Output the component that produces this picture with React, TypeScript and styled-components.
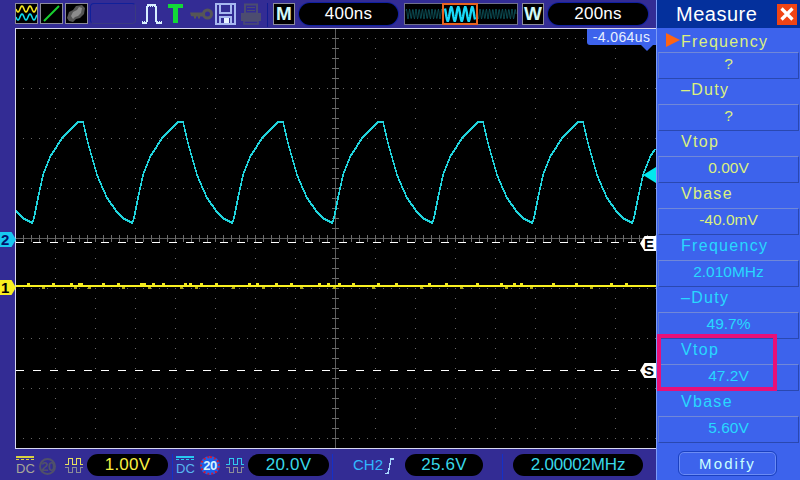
import React from "react";
import styled, { createGlobalStyle } from "styled-components";

const Global = createGlobalStyle`
  html, body { margin: 0; padding: 0; background: #332c94; }
  #root { width: 800px; height: 480px; overflow: hidden; }
  * { box-sizing: border-box; }
`;
const FONT = `"Liberation Sans", Arial, sans-serif`;

const Screen = styled.div`
  width: 800px; height: 480px; display: flex; font-family: ${FONT}; background: #332c94; position: relative; overflow: hidden;
`;
const LeftColumn = styled.div`
  width: 656px; height: 480px; display: flex; flex-direction: column;
`;
const TopBar = styled.div`
  height: 28px; padding: 3px 0 0 15px; display: flex; align-items: flex-start; flex: none;
`;
const IconFrame = styled.div<{ $mr?: number }>`
  width: 23px; height: 21px; margin-right: ${p => p.$mr ?? 2}px; background: #000; border: 1px solid #8c8c9c; display: flex; flex: none;
`;
const EmptySlot = styled.div`
  width: 46px; height: 21px; margin-right: 5px; border: 1px solid #1c2a9c; border-radius: 4px; border-color: #10209a #3a3a80 #3a3a80 #10209a; flex: none;
`;
const ToolIcon = styled.svg<{ $w: number; $mr: number }>`
  width: ${p => p.$w}px; height: 22px; margin-right: ${p => p.$mr}px; flex: none; display: block;
`;
const Separator = styled.div<{ $mr: number; $ml?: number }>`
  width: 1px; height: 24px; background: #101c90; margin: 0 ${p => p.$mr}px 0 ${p => p.$ml ?? 0}px; flex: none;
`;
const LetterBox = styled.div<{ $mr: number }>`
  width: 22px; height: 22px; margin-right: ${p => p.$mr}px; background: #000; border: 1px solid #8c8c9c; color: #d0f8f8;
  font: bold 19px/20px ${FONT}; text-align: center; flex: none;
`;
const Pill = styled.div<{ $w: number; $mr?: number; $color?: string; $ls?: number }>`
  width: ${p => p.$w}px; height: 22px; margin-right: ${p => p.$mr ?? 0}px; border-radius: 11px; background: #000;
  color: ${p => p.$color ?? "#fff"}; font-size: 17px; line-height: 22px; letter-spacing: ${p => p.$ls ?? 0.2}px;
  text-align: center; flex: none;
`;
const TopPill = styled(Pill)`
  box-shadow: 0 0 0 1px #1020a0;
`;
const WaveView = styled.svg`
  width: 114px; height: 22px; margin-right: 4px; flex: none; display: block;
`;
const Scope = styled.div`
  position: relative; width: 641px; height: 421px; margin-left: 15px; background: #000; flex: none;
  border-top: 1px solid #d8d8f0; border-left: 1px solid #d8d8f0; border-bottom: 1px solid #d8d8f0;
`;
const Plot = styled.svg`
  display: block; width: 640px; height: 419px;
`;
const TimeTag = styled.div`
  position: absolute; top: 0; right: 0; width: 69px; height: 16px; background: #3d63ec; color: #e8f0ff; border-radius: 0 0 0 3px;
  font-size: 14px; line-height: 16px; letter-spacing: 0.4px; text-align: center; white-space: nowrap;
  &::after { content: ""; position: absolute; top: 16px; right: 3px; border: 6px solid transparent; border-top: 6px solid #3d63ec; border-bottom: 0; }
`;
const Marker = styled.div<{ $y: number; $bg: string; $side: "left" | "right"; $fg?: string }>`
  position: absolute; top: ${p => p.$y - 29 - 7}px; ${p => p.$side === "left" ? "left: -16px;" : "right: 0;"}
  width: 16px; height: 15px; background: ${p => p.$bg}; color: ${p => p.$fg ?? "#000"};
  clip-path: ${p => p.$side === "left"
    ? "polygon(0 0, 72% 0, 100% 50%, 72% 100%, 0 100%)"
    : "polygon(28% 0, 100% 0, 100% 100%, 28% 100%, 0 50%)"};
  font: bold 15px/15px ${FONT}; text-align: ${p => p.$side === "left" ? "left" : "right"}; padding: 0 ${p => p.$side === "left" ? 1 : 2}px;
`;
const TriggerArrow = styled.div`
  position: absolute; top: 138px; right: 0; width: 0; height: 0;
  border-top: 8px solid transparent; border-bottom: 8px solid transparent; border-right: 13px solid #00e8ee;
`;
const BottomBar = styled.div`
  flex: 1; display: flex; align-items: flex-start; padding: 5px 0 0 16px;
`;
const DcBadge = styled.div<{ $color: string; $text: string; $mr: number }>`
  width: 18px; height: 20px; margin: 2px ${p => p.$mr}px 0 0; flex: none; color: ${p => p.$text};
  border-top: 2px solid ${p => p.$color};
  font: 13px/11px ${FONT}; text-align: center;
  &::before { content: ""; display: block; height: 1px; margin: 1px 0 2px; border-top: 1px dashed ${p => p.$color}; }
`;
const LimitBadge = styled.div<{ $on?: boolean; $mr: number }>`
  width: ${p => p.$on ? 20 : 17}px; height: ${p => p.$on ? 19 : 17}px; margin: ${p => p.$on ? 2 : 4}px ${p => p.$mr}px 0 0; flex: none; border-radius: 50%;
  background: ${p => p.$on ? "#1e60e8" : "transparent"}; border: 2px ${p => p.$on ? "dotted #d01838" : "solid #50506a"};
  color: ${p => p.$on ? "#d8f4ff" : "#50506a"}; font: bold 13px/${p => p.$on ? 15 : 13}px ${FONT}; text-align: center; letter-spacing: -0.5px;
`;
const CoupleIcon = styled.svg<{ $mr: number }>`
  width: 18px; height: 18px; margin: 2px ${p => p.$mr}px 0 0; flex: none; display: block;
`;
const BarSeparator = styled.div<{ $mr: number; $ml?: number }>`
  width: 1px; height: 26px; background: #1430c8; margin: 0 ${p => p.$mr}px 0 ${p => p.$ml ?? 0}px; flex: none;
`;
const SourceLabel = styled.div`
  width: 32px; color: #30b8ff; font-size: 15px; line-height: 22px; flex: none; white-space: nowrap;
`;
const EdgeIcon = styled.svg`
  width: 9px; height: 18px; margin: 3px 11px 0 0; flex: none; display: block;
`;
const Panel = styled.div`
  width: 144px; height: 480px; background: #3d63ec; border-left: 1px solid #7c9cf8; display: flex; flex-direction: column; flex: none;
`;
const PanelHeader = styled.div`
  height: 28px; background: #04309c; display: flex; align-items: center; padding: 0 3px 0 19px; flex: none;
`;
const PanelTitle = styled.div`
  flex: 1; color: #fff; font-size: 20px; letter-spacing: 0.5px; line-height: 28px;
`;
const CloseButton = styled.div`
  width: 20px; height: 21px; background: #f04414; display: flex; align-items: center; justify-content: center; flex: none;
`;
const Rows = styled.div`
  display: flex; flex-direction: column;
`;
const MeasureItem = styled.div`
  display: flex; flex-direction: column; height: 52px;
`;
const ItemLabel = styled.div<{ $color: string; $first?: boolean }>`
  height: 24px; position: relative; padding-left: 24px; color: ${p => p.$color}; font-size: 16px;
  line-height: ${p => p.$first ? 28 : 20}px; letter-spacing: 1.3px; white-space: nowrap;
`;
const Cursor = styled.span`
  position: absolute; left: 9px; top: 5px; width: 0; height: 0;
  border-top: 7px solid transparent; border-bottom: 7px solid transparent; border-left: 14px solid #ff6414;
`;
const ValueBox = styled.div<{ $color: string }>`
  height: 27px; margin-left: 1px; width: 141px; color: ${p => p.$color}; font-size: 15.5px; line-height: 22px;
  text-align: center; border: 1px solid; border-color: #7088d8 #2a48b0 #2a48b0 #6078d0; white-space: nowrap;
`;
const ModifyButton = styled.div`
  width: 99px; height: 25px; margin: 7px 0 0 21px; border: 1px solid #1a40c0; border-radius: 6px; color: #c8ffff;
  font-size: 15px; line-height: 24px; letter-spacing: 2.1px; text-align: center; box-shadow: 0 0 0 1px #6c8cf4 inset;
`;
const Highlight = styled.div`
  position: absolute; left: 657px; top: 334px; width: 120px; height: 57px; border: 4px solid #e81078;
`;

function troughOffset(o: number): number {
  const t: [number, number][] = [[0,223],[2,218],[6,198],[11,175],[18,157],[30,138],[35,133],[43,125],[46,122],[51,122],[56,143],[65,175],[75,198],[85,212],[91,218],[100,223]];
  for (let i = 1; i < t.length; i++) {
    if (o <= t[i][0]) {
      const [x0, y0] = t[i - 1], [x1, y1] = t[i];
      return y0 + (y1 - y0) * (o - x0) / (x1 - x0);
    }
  }
  return 223;
}
const tracePts = (() => {
  const pts: string[] = [];
  for (let x = 16; x <= 655; x++) {
    const o = (((x - 32) % 100) + 100) % 100;
    pts.push(`${x},${Math.round(troughOffset(o))}`);
  }
  return pts.join(" ");
})();

const dots = (() => {
  let d = "";
  for (let y = 38; y <= 438; y += 50) for (let x = 23; x < 656; x += 8) d += `M${x} ${y}h1v1h-1z`;
  for (let x = 55; x <= 615; x += 40) for (let y = 38; y <= 438; y += 10) d += `M${x} ${y}h1v1h-1z`;
  return d;
})();
const ticks = (() => {
  let d = "";
  for (let x = 23; x < 656; x += 8) d += `M${x}.5 235v7`;
  for (let y = 38; y <= 438; y += 10) d += `M332 ${y}.5h7`;
  return d;
})();
const dashes = (y: number, start: number) => {
  let d = "";
  for (let x = start; x < 640; x += 17) d += `M${x} ${y}.5h8`;
  return d;
};
const noise = (() => {
  const xs = [27,42,52,70,74,78,80,88,102,117,122,140,143,148,152,162,180,184,189,195,200,215,232,248,256,262,275,290,300,318,327,333,338,352,372,377,395,420,428,445,460,476,500,505,513,520,530,552,575,590,610,625];
  return xs.map((x, i) => ({ x, low: i % 3 === 1 }));
})();

const sine = (x0: number, x1: number, period: number, mid: number, amp: number) => {
  const p: string[] = [];
  for (let x = x0; x <= x1; x += 0.5) p.push(`${x},${(mid + amp * Math.sin((x / period) * 2 * Math.PI)).toFixed(1)}`);
  return p.join(" ");
};

const Couple = ({ color, mr }: { color: string; mr: number }) => (
  <CoupleIcon $mr={mr} viewBox="0 0 18 18" fill="none" shapeRendering="crispEdges">
    <path d="M0 8h3V2h4v6h4V2h4v6h3" stroke={color} strokeWidth="1" />
    <path d="M0 11h3v5h4v-5h4v5h4v-5h3" stroke="#8c8c98" strokeWidth="1" />
  </CoupleIcon>
);

const labels: { label: string; value: string; color: string; on?: boolean }[] = [
  { label: "Frequency", value: "?", color: "#dcf080", on: true },
  { label: "–Duty", value: "?", color: "#dcf080" },
  { label: "Vtop", value: "0.00V", color: "#dcf080" },
  { label: "Vbase", value: "-40.0mV", color: "#dcf080" },
  { label: "Frequency", value: "2.010MHz", color: "#28d8ff" },
  { label: "–Duty", value: "49.7%", color: "#28d8ff" },
  { label: "Vtop", value: "47.2V", color: "#28d8ff" },
  { label: "Vbase", value: "5.60V", color: "#28d8ff" },
];

export default function App() {
  return (
    <Screen>
      <Global />
      <LeftColumn>
        <TopBar>
          <IconFrame>
            <svg width="21" height="19" viewBox="0 0 21 19" fill="none">
              <polyline points={sine(0, 21, 8, 5, 3)} stroke="#f8e820" strokeWidth="1.6" />
              <polyline points={sine(0, 21, 8, 13, 3)} stroke="#10e0f0" strokeWidth="1.6" />
            </svg>
          </IconFrame>
          <IconFrame>
            <svg width="21" height="19" viewBox="0 0 21 19" fill="none">
              <path d="M3 17L18 2" stroke="#18d030" strokeWidth="2" />
            </svg>
          </IconFrame>
          <IconFrame>
            <svg width="21" height="19" viewBox="0 0 21 19">
              <path d="M1 14L3 8l4-2 3-4 6-1 3 3-1 6-4 4-4 1-3 3-4-1z" fill="#555" />
              <path d="M5 12l2-4 4-2 2-3 3 1-1 5-3 3-3 1-2 2z" fill="#8c8c8c" />
            </svg>
          </IconFrame>
          <EmptySlot />
          <ToolIcon $w={21} $mr={6} viewBox="0 0 21 22" fill="none" shapeRendering="crispEdges">
            <path d="M1 20h4l1-2V4l1-2h7l1 2v14l1 2h4" stroke="#d8f0ff" strokeWidth="1.6" />
            <path d="M7 1v3M9 1v3M11 1v3M13 1v3M1 18v3M3 18v3M16 18v3M18 18v3M20 18v3" stroke="#d8f0ff" />
          </ToolIcon>
          <ToolIcon $w={15} $mr={7} viewBox="0 0 15 22" fill="#12d838">
            <path d="M0 1h15v4H10v15H5V5H0z" />
          </ToolIcon>
          <ToolIcon $w={23} $mr={2} viewBox="0 0 23 22" fill="none">
            <circle cx="17.5" cy="11" r="4" stroke="#565656" strokeWidth="3" />
            <path d="M0 9.5h14v4H10v2H8v-2H6v2H4v-2L1 13z" fill="#565656" />
          </ToolIcon>
          <ToolIcon $w={21} $mr={4} viewBox="0 0 21 22" fill="none" shapeRendering="crispEdges">
            <path d="M1 1h19v20H1z" stroke="#a8b8f0" strokeWidth="1.4" />
            <path d="M5 1v9h11V1" stroke="#a8b8f0" strokeWidth="1.4" />
            <path d="M5 21v-7h11v7" stroke="#a8b8f0" strokeWidth="1.4" />
            <path d="M9 15h5v5H9z" fill="#e8f4ff" />
          </ToolIcon>
          <ToolIcon $w={22} $mr={5} viewBox="0 0 22 22" fill="none">
            <path d="M5 1.5h12v9H5z" stroke="#4c4c70" strokeWidth="2" />
            <path d="M1 10h20v8H1z" fill="#4c4c70" />
            <path d="M4 18h14v3H4z" stroke="#4c4c70" strokeWidth="1.5" />
            <path d="M7 4.5h8M7 7.5h8" stroke="#4c4c70" strokeWidth="1.2" />
          </ToolIcon>
          <Separator $mr={5} />
          <LetterBox $mr={4}>M</LetterBox>
          <TopPill $w={99} $mr={6}>400ns</TopPill>
          <WaveView viewBox="0 0 114 22" fill="none">
            <rect x="0.5" y="0.5" width="113" height="21" fill="#000" stroke="#70708c" />
            <polyline points={sine(2, 112, 3.2, 11, 5)} stroke="#0e5c64" strokeWidth="0.8" />
            <rect x="39" y="1" width="34" height="20" fill="#000" />
            <polyline points={sine(41, 71, 7, 11, 7)} stroke="#18d8f8" strokeWidth="2.4" />
            <rect x="39" y="1" width="34" height="20" stroke="#e86420" strokeWidth="2" />
          </WaveView>
          <LetterBox $mr={4}>W</LetterBox>
          <TopPill $w={100}>200ns</TopPill>
        </TopBar>
        <Scope>
          <Plot viewBox="16 29 640 419" fill="none">
            <path d={dots} fill="#666" />
            <path d="M16 238.5H656M335.5 29V448" stroke="#5c5c5c" />
            <path d={ticks} stroke="#6c6c6c" />
            <path d={dashes(242, 16)} stroke="#fff" strokeWidth="1" shapeRendering="crispEdges" />
            <path d={dashes(370, 16)} stroke="#fff" strokeWidth="1" shapeRendering="crispEdges" />
            <rect x="16" y="285" width="640" height="2" fill="#f8f020" />
            {noise.map(n => <rect key={n.x} x={n.x} y={n.low ? 287 : 283} width="3" height="2" fill={n.low ? "#b0a814" : "#f0e81c"} />)}
            <polyline points={tracePts} stroke="#20d4dc" strokeWidth="1.6" strokeLinejoin="round" shapeRendering="crispEdges" />
          </Plot>
          <TimeTag>-4.064us</TimeTag>
          <TriggerArrow />
          <Marker $y={239} $side="left" $bg="#18c8f0" $fg="#00106c">2</Marker>
          <Marker $y={287} $side="left" $bg="#f8f020">1</Marker>
          <Marker $y={243} $side="right" $bg="#fff">E</Marker>
          <Marker $y={370} $side="right" $bg="#fff">S</Marker>
        </Scope>
        <BottomBar>
          <DcBadge $color="#d8d040" $text="#a8a898" $mr={5}>DC</DcBadge>
          <LimitBadge $mr={9}>20</LimitBadge>
          <Couple color="#e8e060" mr={4} />
          <Pill $w={81} $mr={4} $color="#f8f040">1.00V</Pill>
          <BarSeparator $mr={3} />
          <DcBadge $color="#28c8f0" $text="#58b8f0" $mr={6}>DC</DcBadge>
          <LimitBadge $on $mr={6}>20</LimitBadge>
          <Couple color="#30c8f0" mr={4} />
          <Pill $w={81} $mr={3} $color="#38d8e8">20.0V</Pill>
          <BarSeparator $mr={20} />
          <SourceLabel>CH2</SourceLabel>
          <EdgeIcon viewBox="0 0 9 18" fill="none" shapeRendering="crispEdges">
            <path d="M0 16.5h3L6 2h3" stroke="#a8d8ff" strokeWidth="1.4" />
          </EdgeIcon>
          <Pill $w={78} $mr={19} $color="#38d8e8">25.6V</Pill>
          <BarSeparator $mr={10} />
          <Pill $w={130} $color="#38d8e8" $ls={-0.2}>2.00002MHz</Pill>
        </BottomBar>
      </LeftColumn>
      <Panel>
        <PanelHeader>
          <PanelTitle>Measure</PanelTitle>
          <CloseButton>
            <svg width="14" height="14" viewBox="0 0 14 14">
              <path d="M1.5 1.5L12.5 12.5M12.5 1.5L1.5 12.5" stroke="#fff" strokeWidth="3.2" />
            </svg>
          </CloseButton>
        </PanelHeader>
        <Rows>
          {labels.map((r, i) => (
            <MeasureItem key={i}>
              <ItemLabel $color={r.color} $first={r.on}>{r.on && <Cursor />}{r.label}</ItemLabel>
              <ValueBox $color={r.color}>{r.value}</ValueBox>
            </MeasureItem>
          ))}
        </Rows>
        <ModifyButton>Modify</ModifyButton>
      </Panel>
      <Highlight />
    </Screen>
  );
}
